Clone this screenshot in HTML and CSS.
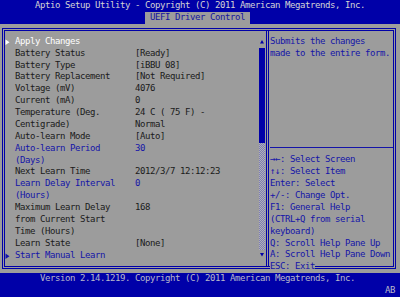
FILE: index.html
```html
<!DOCTYPE html>
<html lang="en">
<head>
  <meta charset="UTF-8">
  <title>Aptio Setup Utility</title>
  <link rel="stylesheet" href="styles.css">
</head>
<body>
<div class="screen">
  <div class="top">
    <div class="title">Aptio Setup Utility - Copyright (C) 2011 American Megatrends, Inc.</div>
    <div class="tabs"><span class="tab">UEFI Driver Control</span></div>
  </div>

  <div class="main">
    <div class="box">
      <div class="setup">
        <div class="items">
          <div class="item active">
            <span class="mark"><svg width="5" height="12" viewBox="0 0 5 12"><polygon points="0.5,3.5 4.5,6.2 0.5,9" fill="#ffffff"/></svg></span>
            <span class="label">Apply Changes</span>
          </div>
          <div class="item"><span class="mark"></span><span class="label">Battery Status</span><span class="value">[Ready]</span></div>
          <div class="item"><span class="mark"></span><span class="label">Battery Type</span><span class="value">[iBBU 08]</span></div>
          <div class="item"><span class="mark"></span><span class="label">Battery Replacement</span><span class="value">[Not Required]</span></div>
          <div class="item"><span class="mark"></span><span class="label">Voltage (mV)</span><span class="value">4076</span></div>
          <div class="item"><span class="mark"></span><span class="label">Current (mA)</span><span class="value">0</span></div>
          <div class="item"><span class="mark"></span><span class="label">Temperature (Deg.<br>Centigrade)</span><span class="value">24 C ( 75 F) -<br>Normal</span></div>
          <div class="item"><span class="mark"></span><span class="label">Auto-learn Mode</span><span class="value">[Auto]</span></div>
          <div class="item edit"><span class="mark"></span><span class="label">Auto-learn Period<br>(Days)</span><span class="value">30</span></div>
          <div class="item"><span class="mark"></span><span class="label">Next Learn Time</span><span class="value">2012/3/7 12:12:23</span></div>
          <div class="item edit"><span class="mark"></span><span class="label">Learn Delay Interval<br>(Hours)</span><span class="value">0</span></div>
          <div class="item"><span class="mark"></span><span class="label">Maximum Learn Delay<br>from Current Start<br>Time (Hours)</span><span class="value">168</span></div>
          <div class="item"><span class="mark"></span><span class="label">Learn State</span><span class="value">[None]</span></div>
          <div class="item edit">
            <span class="mark"><svg width="5" height="12" viewBox="0 0 5 12"><polygon points="0.5,3.5 4.5,6.2 0.5,9" fill="#1414a8"/></svg></span>
            <span class="label">Start Manual Learn</span>
          </div>
        </div>
        <div class="scroll">
          <svg class="arrow" width="6" height="12" viewBox="0 0 6 12"><polygon points="1,7.5 3,4 5,7.5" fill="#0000a8"/></svg>
          <div class="thumb"></div>
          <div class="track"></div>
          <svg class="arrow" width="6" height="12" viewBox="0 0 6 12"><polygon points="1,3 5,3 3,6.5" fill="#0000a8"/></svg>
        </div>
      </div>

      <div class="help">
        <div class="help-text">
          Submits the changes<br>
          made to the entire form.
        </div>
        <div class="rule"></div>
        <div class="keys">
          →←: Select Screen<br>
          ↑↓: Select Item<br>
          Enter: Select<br>
          +/-: Change Opt.<br>
          F1: General Help<br>
          (CTRL+Q from serial<br>
          keyboard)<br>
          Q: Scroll Help Pane Up<br>
          A: Scroll Help Pane Down
        </div>
        <span class="esc">ESC: Exit</span>
      </div>
    </div>
  </div>

  <div class="bottom">
    <div class="version">Version 2.14.1219. Copyright (C) 2011 American Megatrends, Inc.</div>
    <div class="ab">AB</div>
  </div>
</div>
</body>
</html>
```

FILE: styles.css
```css
body { margin: 0; background: #0000a8; font-family: "DejaVu Sans Mono", monospace; font-size: 9px; letter-spacing: -0.42px; line-height: 11.88px; }
.screen { width: 400px; height: 297px; display: flex; flex-direction: column; overflow: hidden; }

.top { height: 23.76px; flex: none; color: #d4d4d4; }
.title { text-align: center; white-space: nowrap; }
.tabs { padding-left: 145px; }
.tab { display: inline-block; width: 105px; box-sizing: border-box; padding-left: 5px; background: #9c9c9c; color: #1414a0; }

.main { height: 249.48px; flex: none; box-sizing: border-box; padding: 4.44px 4px 4.44px 2px; background: #9c9c9c; }
.box { height: 100%; box-sizing: border-box; border: 3px double #0000a8; display: flex; }

.setup { width: 261px; flex: none; display: flex; padding-top: 4.44px; }
.items { width: 254px; flex: none; }
.item { display: flex; color: #1a1a1a; white-space: nowrap; }
.item.active { color: #ffffff; }
.item.edit { color: #1414a8; }
.mark { width: 10px; flex: none; }
.mark svg { display: block; }
.label { width: 120px; flex: none; }

.scroll { width: 6px; flex: none; display: flex; flex-direction: column; }
.arrow { display: block; }
.thumb { height: 95.04px; background: #0000a8; }
.track { height: 106.92px; background: repeating-conic-gradient(#7c7cb4 0 25%, #b0b0b8 0 50%) 0 0 / 2px 2px; }

.help { flex: 1; position: relative; border-left: 3px double #0000a8; padding: 4.44px 0 0 1px; color: #1414a8; white-space: nowrap; }
.help-text { height: 106.92px; }
.rule { height: 11.88px; background: linear-gradient(#1414a8, #1414a8) 0 4.5px / 100% 1px no-repeat; }
.esc { position: absolute; left: 1px; bottom: -7.5px; background: #9c9c9c; }

.bottom { height: 23.76px; flex: none; color: #b8b8c8; }
.version { padding-left: 40px; white-space: nowrap; }
.ab { text-align: right; padding-right: 5px; }
```
